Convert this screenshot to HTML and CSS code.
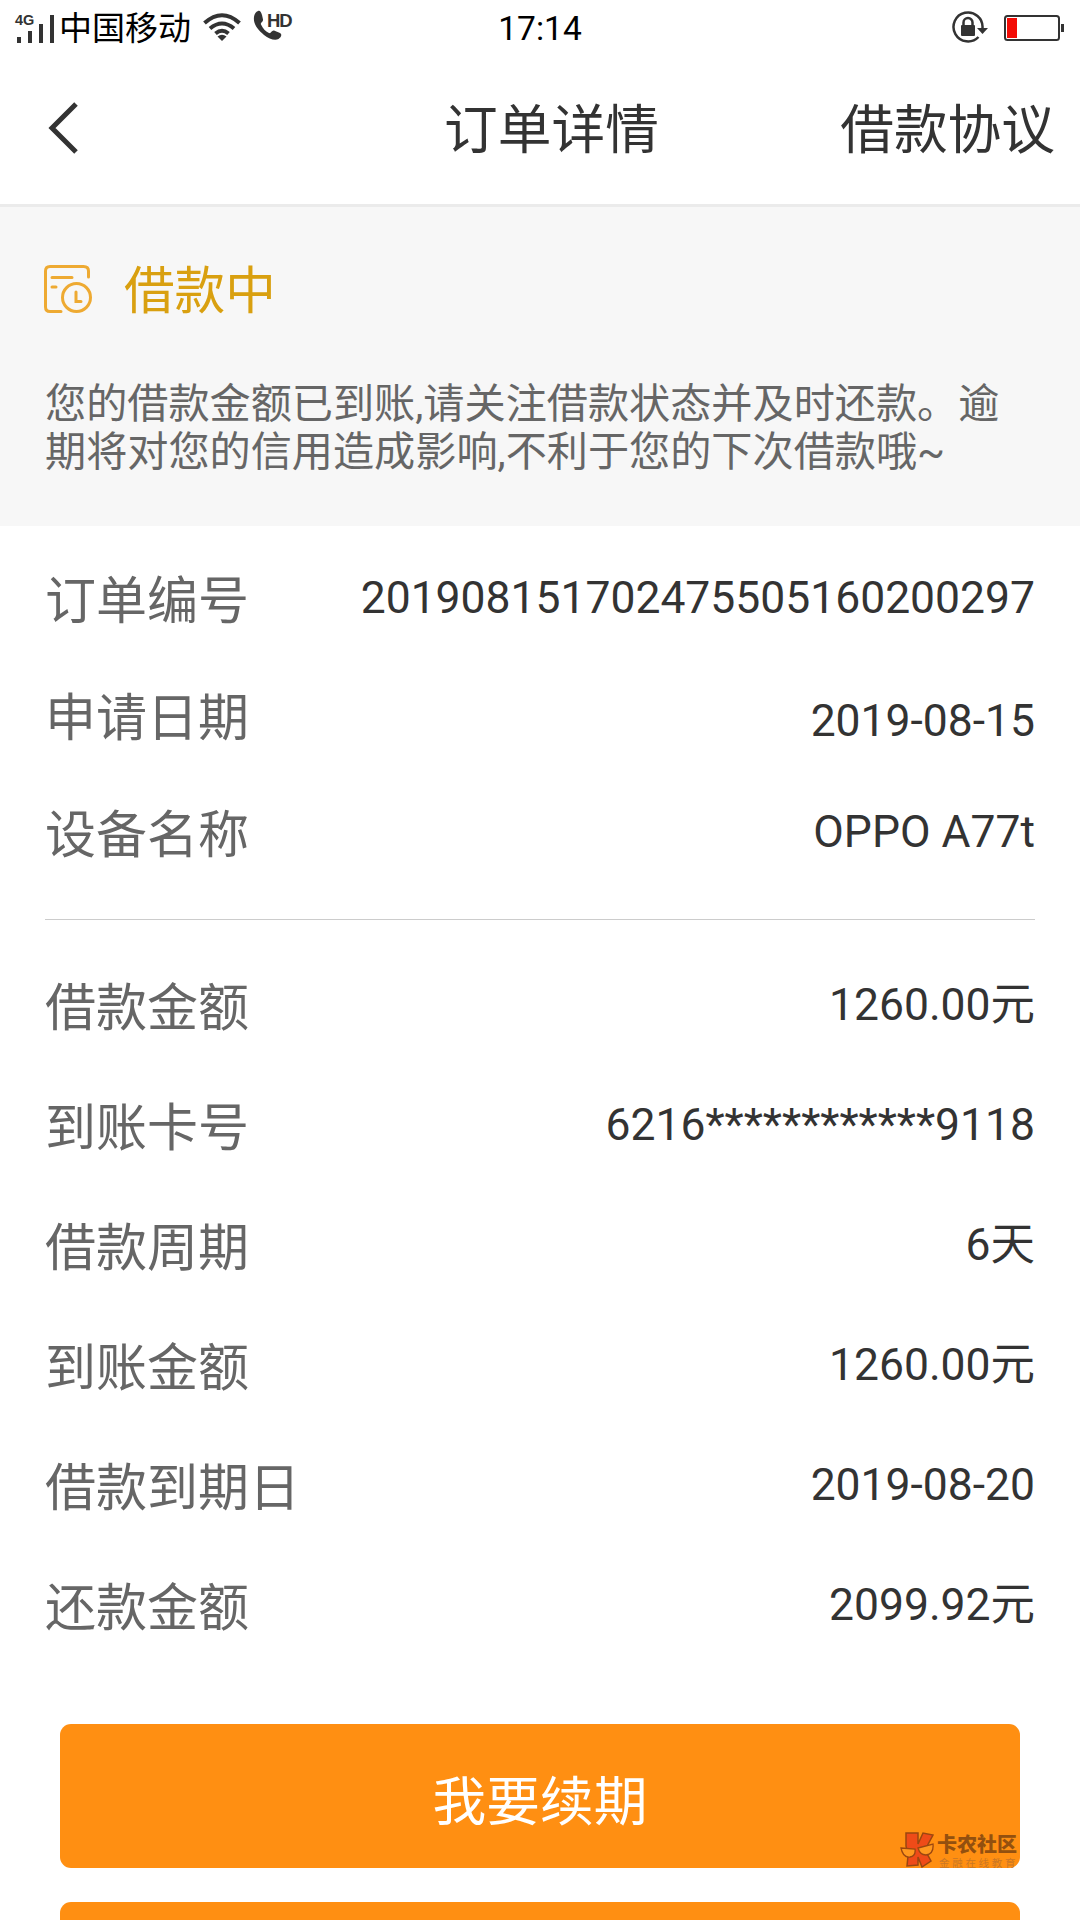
FILE: index.html
```html
<!DOCTYPE html>
<html lang="zh-CN">
<head>
<meta charset="utf-8">
<title>订单详情</title>
<link rel="stylesheet" href="styles.css">
</head>
<body>
<div class="screen">
  <header class="status-bar">
    <div class="status-left">
      <svg class="signal" width="44" height="34" viewBox="0 0 44 34" fill="#333"><text class="net" x="1" y="14">4G</text><rect x="3" y="26" width="4" height="6"/><rect x="14" y="20" width="4" height="12"/><rect x="25" y="13" width="4" height="19"/><rect x="36" y="4" width="4" height="28"/></svg>
      <span class="carrier">中国移动</span>
      <svg class="wifi" width="38" height="28" viewBox="0 0 38 28" fill="none" stroke="#333" stroke-width="4"><path d="M1.500 10Q19 -5.500 36.500 10"/><path d="M7 15.500Q19 5.500 31 15.500"/><path d="M12.500 20.500Q19 15 25.500 20.500"/><path d="M14.500 23.500Q19 20 23.500 23.500L19 28Z" fill="#333" stroke="none"/></svg>
      <svg class="call" width="48" height="36" viewBox="0 -4 48 36" fill="#333"><path d="M5 -1C7 -2 8 0 9 3L10 7.500C10.500 10 7 10.500 8 12.500C10 17 13 19.500 16 21C18 22 18.500 18 21 18.500L27 21C29.500 22.500 28 25.500 25.500 27C22 29 16 27 11 23C5 18 0 12 1 5C1.500 1.500 3 0 5 -1Z"/><text class="hd" x="14" y="15">HD</text></svg>
    </div>
    <span class="clock">17:14</span>
    <div class="status-right">
      <svg class="lock" width="36" height="34" viewBox="0 0 36 34"><path d="M26.500 26A14.500 14.500 0 1 1 30.500 17" fill="none" stroke="#333" stroke-width="2.500"/><path d="M25 17H36L30.500 23Z" fill="#333"/><rect x="9" y="14" width="14" height="11" rx="1" fill="#333"/><path d="M11.500 15V11.500a4.500 4.500 0 0 1 9 0V15" fill="none" stroke="#333" stroke-width="2.500"/></svg>
      <svg class="battery" width="60" height="26" viewBox="0 0 60 26"><rect x="1" y="1" width="54" height="24" rx="2.500" fill="none" stroke="#333" stroke-width="2"/><rect x="3" y="3" width="10" height="20" fill="#f30c06"/><rect x="57" y="9" width="3" height="8" fill="#333"/></svg>
    </div>
  </header>

  <nav class="nav">
    <svg class="back" width="32" height="54" viewBox="0 0 32 54"><path d="M28 3L4 27L28 51" fill="none" stroke="#333" stroke-width="5"/></svg>
    <h1 class="title">订单详情</h1>
    <a class="agreement">借款协议</a>
  </nav>

  <section class="notice">
    <div class="state">
      <svg class="state-icon" width="50" height="50" viewBox="0 0 50 50" fill="none" stroke="#eeaa32" stroke-width="3" stroke-linecap="round"><path d="M44.500 12V6Q44.500 1.500 39.500 1.500H6Q1.500 1.500 1.500 6V42Q1.500 46.500 6 46.500H17"/><path d="M8 12.500H28M8 22H12"/><circle cx="32.500" cy="32.500" r="14"/><path d="M32 27V36.500H37"/></svg>
      <span class="state-text">借款中</span>
    </div>
    <p class="message">您的借款金额已到账,请关注借款状态并及时还款。逾<br>期将对您的信用造成影响,不利于您的下次借款哦~</p>
  </section>

  <dl class="details order">
    <div class="row"><dt>订单编号</dt><dd>201908151702475505160200297</dd></div>
    <div class="row date"><dt>申请日期</dt><dd>2019-08-15</dd></div>
    <div class="row"><dt>设备名称</dt><dd>OPPO A77t</dd></div>
  </dl>
  <dl class="details loan">
    <div class="row"><dt>借款金额</dt><dd>1260.00元</dd></div>
    <div class="row"><dt>到账卡号</dt><dd>6216************9118</dd></div>
    <div class="row"><dt>借款周期</dt><dd>6天</dd></div>
    <div class="row"><dt>到账金额</dt><dd>1260.00元</dd></div>
    <div class="row"><dt>借款到期日</dt><dd>2019-08-20</dd></div>
    <div class="row"><dt>还款金额</dt><dd>2099.92元</dd></div>
  </dl>

  <div class="actions">
    <button class="button">我要续期</button>
    <button class="button"></button>
  </div>

  <div class="brand">
    <svg class="brand-logo" width="34" height="36" viewBox="0 0 34 36"><path d="M6 1H18V12L23 1L33 3L25 18L31 29L22 35L18 25V33L7 34L8 24L6 14Z" fill="#ef4b18" stroke="#9b4710" stroke-width="1.500"/><path d="M1 16L15 17Q16 24 10 25Q3 26 1 16ZM18 16L33 12Q34 22 26 23Q20 23 18 16Z" fill="#ff981f" stroke="#9b4710" stroke-width="1.300"/></svg>
    <div class="brand-words"><span class="brand-name">卡农社区</span><span class="brand-tag">金融在线教育</span></div>
  </div>
</div>
</body>
</html>
```
FILE: styles.css
```css
* { box-sizing: border-box; margin: 0; padding: 0; }

body {
  background: #fff;
  color: #333;
  font-family: Roboto, "Noto Sans CJK SC", sans-serif;
}

.screen {
  position: relative;
  width: 1080px;
  height: 1920px;
  overflow: hidden;
}

.status-bar {
  display: grid;
  grid-template-columns: 1fr auto 1fr;
  align-items: center;
  height: 56px;
  padding: 0 16px 0 14px;
}
.status-left, .status-right { display: flex; align-items: center; }
.status-right { justify-content: flex-end; gap: 16px; padding-bottom: 2px; }
.signal { margin-top: -2px; }
.carrier { margin-left: 1px; color: #000; font-size: 33px; line-height: 56px; padding-top: 1px; }
.wifi { margin: -3px 0 0 12px; }
.call { margin: -5px 0 0 12px; }
.net { font: bold 14.5px "Liberation Sans", sans-serif; }
.hd { font: bold 18.5px "Liberation Sans", sans-serif; letter-spacing: -1px; }
.clock { padding-left: 2px; color: #000; font-size: 33.5px; }

.nav {
  display: grid;
  grid-template-columns: 1fr auto 1fr;
  align-items: center;
  height: 151px;
  padding: 2px 25px 0 48px;
  border-bottom: 3px solid #ebebeb;
}
.back { margin-bottom: 6px; }
.title, .agreement { font-size: 53.7px; font-weight: 400; line-height: 80px; }
.agreement { justify-self: end; }

.notice {
  height: 319px;
  padding: 44px 45px 0 44px;
  background: #f7f7f7;
}
.state { display: flex; align-items: center; gap: 30px; height: 80px; }
.state-icon { margin-bottom: 2px; }
.state-text { padding-top: 2px; color: #d9a010; font-size: 50.6px; line-height: 80px; }
.message { margin: 49px 0 0 1px; color: #666; font-size: 41.15px; line-height: 48px; white-space: nowrap; }

.details { margin: 0 45px; }
.row { display: flex; justify-content: space-between; align-items: center; }
.row dt { color: #666; font-size: 51px; line-height: 80px; }
.row dd { padding-bottom: 8px; font-size: 44.45px; line-height: 60px; }
.row.date dd { padding: 5px 0 0; }
.order { height: 394px; padding-top: 17px; border-bottom: 1px solid #ccc; }
.order .row { height: 117px; }
.loan { padding-top: 29px; }
.loan .row { height: 120px; }

.actions { display: flex; flex-direction: column; gap: 34px; margin: 55px 60px 0; }
.button {
  height: 144px;
  flex: none;
  padding-top: 14px;
  border: 0;
  border-radius: 11px;
  background: #ff8f12;
  color: #fff;
  font: 53.7px/130px Roboto, "Noto Sans CJK SC", sans-serif;
}

.brand {
  position: absolute;
  left: 900px;
  top: 1832px;
  display: flex;
  gap: 3px;
}
.brand-words { display: flex; flex-direction: column; white-space: nowrap; }
.brand-name { color: #93500f; font: 900 20px/24px "Noto Sans CJK SC", sans-serif; }
.brand-tag { margin-left: 2px; color: #ca7725; font: 10.5px/13px "Noto Sans CJK SC", sans-serif; letter-spacing: 2.7px; }
```
